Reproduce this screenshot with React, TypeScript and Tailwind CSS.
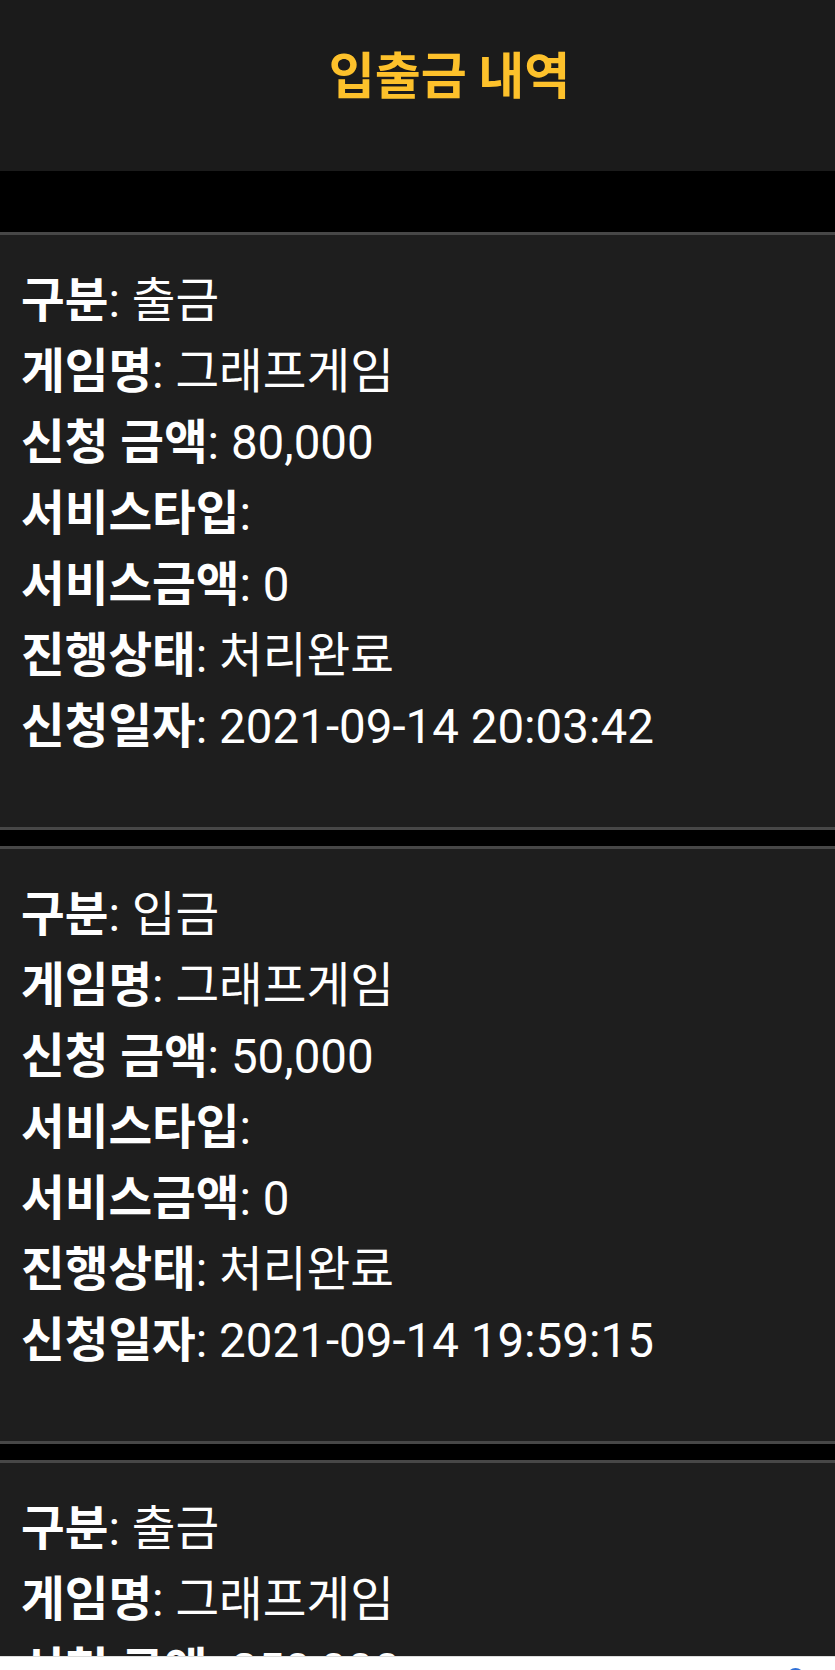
import React from 'react';

const records = [
  { kind: '출금', game: '그래프게임', amount: '80,000', serviceType: '', serviceAmount: '0', status: '처리완료', date: '2021-09-14 20:03:42' },
  { kind: '입금', game: '그래프게임', amount: '50,000', serviceType: '', serviceAmount: '0', status: '처리완료', date: '2021-09-14 19:59:15' },
  { kind: '출금', game: '그래프게임', amount: '250,000', serviceType: '', serviceAmount: '0', status: '처리완료', date: '2021-09-14 19:41:08' },
];

function Row({ label, value }: { label: string; value: string }) {
  return (
    <div className='leading-[71px] whitespace-nowrap'>
      <b className='font-bold'>{label}</b>: {value}
    </div>
  );
}

export default function App() {
  return (
    <div className='w-[835px] h-[1670px] overflow-hidden bg-black flex flex-col text-white font-["Roboto","Noto_Sans_CJK_KR",sans-serif]'>
      <header className='h-[171px] shrink-0 bg-[#1b1b1b] flex justify-center pl-[64px] pt-[47px]'>
        <h1 className='text-[50px] leading-[50px] font-bold text-[#fdc12b] font-["Noto_Sans_CJK_KR",sans-serif]'>입출금 내역</h1>
      </header>

      <main className='flex-1 min-h-0 overflow-hidden pt-[61px] flex flex-col gap-4'>
        {records.map((r, i) => (
          <section key={i} className='shrink-0 bg-[#1e1e1e] border-y-[3px] border-[#474747] pl-[21px] pt-[31px] pb-[64px] text-[47.5px]'>
            <Row label='구분' value={r.kind} />
            <Row label='게임명' value={r.game} />
            <Row label='신청 금액' value={r.amount} />
            <Row label='서비스타입' value={r.serviceType} />
            <Row label='서비스금액' value={r.serviceAmount} />
            <Row label='진행상태' value={r.status} />
            <Row label='신청일자' value={r.date} />
          </section>
        ))}
      </main>

      <div className='h-[14px] shrink-0 bg-white border-t border-[#dcdcdc] relative overflow-hidden'>
        <span className='absolute left-[787px] top-[11px] w-[17px] h-[17px] rounded-full bg-[#2f6fd6]' />
      </div>
    </div>
  );
}
